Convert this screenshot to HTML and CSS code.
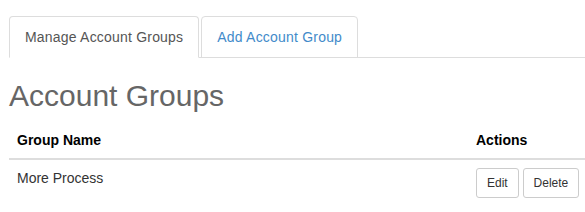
FILE: index.html
```html
<!DOCTYPE html>
<html lang="en">
<head>
  <meta charset="UTF-8">
  <title>Account Groups</title>
  <link rel="stylesheet" href="styles.css">
</head>
<body>

<div class="page">
  <ul class="tabs">
    <li class="tab active"><a href="#">Manage Account Groups</a></li>
    <li class="tab"><a href="#">Add Account Group</a></li>
  </ul>

  <h2 class="title">Account Groups</h2>

  <table class="groups">
    <thead>
      <tr>
        <th>Group Name</th>
        <th class="actions">Actions</th>
      </tr>
    </thead>
    <tbody>
      <tr>
        <td>More Process</td>
        <td class="actions">
          <button class="btn">Edit</button>
          <button class="btn">Delete</button>
        </td>
      </tr>
    </tbody>
  </table>
</div>

</body>
</html>
```

FILE: styles.css
```css
html, body { margin: 0; overflow: hidden; }
body {
  font-family: "Liberation Sans", Arial, sans-serif;
  font-size: 14px;
  line-height: 20px;
  color: #333;
  background: #fff;
}
.page { padding: 16px 0 0 9px; width: 579px; }

.tabs {
  list-style: none;
  margin: 0 -20px 0 0;
  padding: 0;
  display: flex;
  border-bottom: 1px solid #ddd;
}
.tab { margin-bottom: -1px; }
.tab a {
  display: block;
  padding: 10px 15px;
  margin-right: 2px;
  border: 1px solid #ddd;
  border-radius: 4px 4px 0 0;
  color: #428bca;
  text-decoration: none;
  letter-spacing: 0.2px;
}
.tab.active a {
  color: #555;
  background: #fff;
  border-bottom-color: transparent;
}

.title {
  font-size: 30px;
  font-weight: 500;
  line-height: 1.1;
  color: #666;
  margin: 21px 0 10px;
}

.groups {
  width: 100%;
  border-collapse: collapse;
}
.groups th, .groups td {
  padding: 8px;
  text-align: left;
  vertical-align: top;
}
.groups th {
  font-weight: bold;
  color: #000;
  border-bottom: 2px solid #ddd;
}
.groups td.actions, .groups th.actions { width: 104px; white-space: nowrap; }

.btn {
  font-family: inherit;
  font-size: 12px;
  line-height: 1.5;
  padding: 5px 10px;
  color: #333;
  background: #fff;
  border: 1px solid #ccc;
  border-radius: 3px;
  cursor: pointer;
}
```
